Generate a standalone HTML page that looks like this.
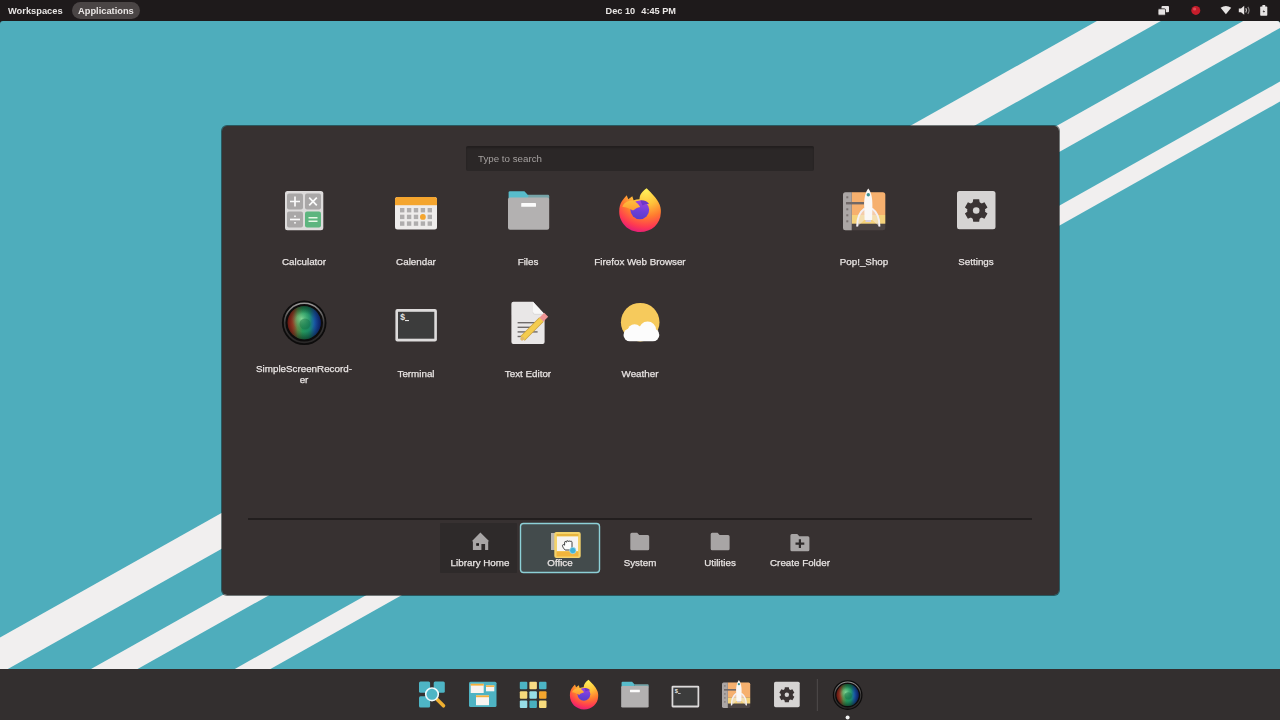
<!DOCTYPE html>
<html><head><meta charset="utf-8">
<style>
*{box-sizing:border-box;margin:0;padding:0}
html,body{width:1280px;height:720px;overflow:hidden;background:#1e1b1b;font-family:"Liberation Sans",sans-serif}
.lbl,.nl,#topbar,#search span{will-change:transform}
.lbl,.nl{-webkit-text-stroke:0.25px #ebe7e6}
#topbar{position:absolute;left:0;top:0;width:1280px;height:21px;background:#1e1a1b;color:#e9e6e5;font-size:9.3px;font-weight:bold;line-height:11px}
#desk{position:absolute;left:0;top:21px;width:1280px;height:648px;background:#4eadbc;overflow:hidden;border-radius:3px 3px 0 0}
#dock{position:absolute;left:0;top:669px;width:1280px;height:51px;background:#332f2f}
#panel{position:absolute;left:220.5px;top:124.5px;width:839px;height:471px;background:#373131;background-clip:padding-box;border:1px solid rgba(10,20,20,.55);border-radius:6px}
#search{position:absolute;left:466px;top:146px;width:348px;height:25px;background:#2b2727;border-radius:2px;box-shadow:inset 0 2px 2px rgba(0,0,0,.22)}
#search span{position:absolute;left:12px;top:7px;font-size:9.75px;line-height:11px;color:#a4a09f}
.lbl{position:absolute;width:112px;color:#e6e2e1;font-size:9.8px;line-height:11px;text-align:center;white-space:nowrap}
.nl{position:absolute;width:80px;color:#e6e2e1;font-size:9.8px;line-height:11px;text-align:center;white-space:nowrap;top:557px}
.abs{position:absolute}
svg.full{position:absolute;left:0;top:0}
</style></head><body>
<div id="topbar">
  <div class="abs" style="left:72px;top:2px;width:68px;height:17px;border-radius:9px;background:#4a4545"></div>
  <div class="abs" style="left:8px;top:6px">Workspaces</div>
  <div class="abs" style="left:78px;top:6px">Applications</div>
  <div class="abs" style="left:605.5px;top:6px;font-size:9.2px">Dec 10</div><div class="abs" style="left:641.3px;top:6px;font-size:9.2px">4:45 PM</div>
</div>
<div id="desk">
  <svg width="1280" height="648" viewBox="0 21 1280 648" style="position:absolute;left:0;top:0">
    <g fill="#f1efef">
      <polygon points="0,637.5 1280,-81.9 1280,-46 0,673.4"/>
      <polygon points="0,720.2 1280,0.3 1280,28 0,746.2"/>
      <polygon points="0,801 1280,81.6 1280,101.6 0,821"/>
    </g>
  </svg>
</div>
<div id="dock"></div>
<div id="panel"></div>
<div id="search"><span>Type to search</span></div>

<svg class="full" width="1280" height="720" viewBox="0 0 1280 720">
<defs>
  <radialGradient id="ffg" cx="0.64" cy="0.04" r="1.05">
    <stop offset="0" stop-color="#fff25a"/>
    <stop offset="0.32" stop-color="#ffc23a"/>
    <stop offset="0.58" stop-color="#ff7c2f"/>
    <stop offset="0.8" stop-color="#ff3b50"/>
    <stop offset="1" stop-color="#d9108a"/>
  </radialGradient>
  <linearGradient id="ffh" x1="0" y1="0" x2="0" y2="1">
    <stop offset="0" stop-color="#ffbe3c"/>
    <stop offset="1" stop-color="#ff9a30"/>
  </linearGradient>
  <linearGradient id="ffp" x1="0.5" y1="0" x2="0.4" y2="1">
    <stop offset="0" stop-color="#a044df"/>
    <stop offset="0.6" stop-color="#6a3fd8"/>
    <stop offset="1" stop-color="#5a3cc8"/>
  </linearGradient>
  <linearGradient id="ssrl" x1="0" y1="0" x2="1" y2="0">
    <stop offset="0" stop-color="#b8281f"/>
    <stop offset="0.16" stop-color="#a8452a"/>
    <stop offset="0.3" stop-color="#5a8a48"/>
    <stop offset="0.45" stop-color="#25955a"/>
    <stop offset="0.65" stop-color="#1a8a66"/>
    <stop offset="0.82" stop-color="#1a5cb0"/>
    <stop offset="1" stop-color="#1838b0"/>
  </linearGradient>
  <radialGradient id="ssrg" cx="0.42" cy="0.38" r="0.32">
    <stop offset="0" stop-color="#9be8a8" stop-opacity=".75"/>
    <stop offset="1" stop-color="#4ac080" stop-opacity="0"/>
  </radialGradient>
  <radialGradient id="ssrv" cx="0.5" cy="0.5" r="0.5">
    <stop offset="0.55" stop-color="#000" stop-opacity="0"/>
    <stop offset="1" stop-color="#000" stop-opacity=".45"/>
  </radialGradient>
  <linearGradient id="ssrr" x1="0" y1="0" x2="0" y2="1">
    <stop offset="0" stop-color="#9a9898"/>
    <stop offset="0.5" stop-color="#3a3838"/>
    <stop offset="1" stop-color="#2a2828"/>
  </linearGradient>

  <!-- Calculator: local box origin (280,186.5) -->
  <g id="i-calc" transform="translate(-280,-186.5)">
    <rect x="285" y="191" width="38.3" height="39.3" rx="2.5" fill="#dddbdb"/>
    <rect x="287" y="193.5" width="16" height="16" rx="2" fill="#a9a7a7"/>
    <rect x="305" y="193.5" width="16" height="16" rx="2" fill="#a9a7a7"/>
    <rect x="287" y="211.5" width="16" height="16" rx="2" fill="#a9a7a7"/>
    <rect x="305" y="211.5" width="16" height="16" rx="2" fill="#5db57f"/>
    <g stroke="#fafafa" stroke-width="1.7" fill="none">
      <path d="M290,201.5H300M295,196.5V206.5"/>
      <path d="M309.2,197.7L316.8,205.3M316.8,197.7L309.2,205.3"/>
      <path d="M290,219.5H300"/>
      <path d="M308.5,217.8H317.5M308.5,221.2H317.5" stroke="#e6f7e6" stroke-width="1.5"/>
    </g>
    <rect x="294.2" y="215.5" width="1.6" height="1.6" fill="#fafafa"/>
    <rect x="294.2" y="222" width="1.6" height="1.6" fill="#fafafa"/>
  </g>

  <!-- Calendar origin (392,186.5) -->
  <g id="i-cal" transform="translate(-392,-186.5)">
    <rect x="395" y="197" width="42" height="32.5" rx="2.5" fill="#eeeceb"/>
    <rect x="395" y="197" width="42" height="8" rx="2.5" fill="#f4a52e"/>
    <rect x="395" y="201" width="42" height="4.2" fill="#f4a52e"/>
    <g fill="#afadad">
      <rect x="400" y="208" width="4.4" height="4.4"/><rect x="406.9" y="208" width="4.4" height="4.4"/><rect x="413.8" y="208" width="4.4" height="4.4"/><rect x="420.7" y="208" width="4.4" height="4.4"/><rect x="427.6" y="208" width="4.4" height="4.4"/>
      <rect x="400" y="214.7" width="4.4" height="4.4"/><rect x="406.9" y="214.7" width="4.4" height="4.4"/><rect x="413.8" y="214.7" width="4.4" height="4.4"/><rect x="427.6" y="214.7" width="4.4" height="4.4"/>
      <rect x="400" y="221.4" width="4.4" height="4.4"/><rect x="406.9" y="221.4" width="4.4" height="4.4"/><rect x="413.8" y="221.4" width="4.4" height="4.4"/><rect x="420.7" y="221.4" width="4.4" height="4.4"/><rect x="427.6" y="221.4" width="4.4" height="4.4"/>
    </g>
    <circle cx="422.9" cy="216.9" r="2.9" fill="#f4a52e"/>
  </g>

  <!-- Files origin (504,186.5) -->
  <g id="i-files" transform="translate(-504,-186.5)">
    <path d="M528,194.8H548Q549.2,194.8 549.2,196.2V199H528Z" fill="#76a4a8"/>
    <path d="M508.6,199V192.6Q508.6,191.2 510,191.2H524.4L528.2,195.2V199Z" fill="#58bccb"/>
    <rect x="508" y="197.4" width="41.2" height="32.3" rx="2" fill="#b3b1b1"/>
    <rect x="521.2" y="203" width="14.8" height="3.8" rx="0.6" fill="#fbfbfb"/>
  </g>

  <!-- Firefox origin (616,186.5) -->
  <g id="i-ff" transform="translate(-616,-186.5)">
    <path d="M646.7,188.3C651,193 657,198 659.7,204.7C661,208 661,211 660.8,213C660.5,224 651.5,232 640,232C628.5,232 619.2,223 619.2,211.5C619.2,207 620.3,203.5 622,201L624.3,198L626.7,195.3L628.3,199.3L632.3,196.3L633.6,200.3C635.5,199.5 637.5,199.2 639.5,199.2C639.6,194.5 642.5,191 646.7,188.3Z" fill="url(#ffg)"/>
    <circle cx="639.8" cy="209.8" r="9.4" fill="url(#ffp)"/>
    <path d="M640.3,200.4C644.5,200.1 647.5,201.6 649.2,204.2C646.5,203.7 644,204.2 642.5,205.6Z" fill="#6e36c8"/>
    <path d="M622.3,206.8C623.8,203 627.5,200.5 632,200.8C635,201 637.8,203.2 640.2,206.9C637.5,207.6 635,208.6 633,210.6C630,208.6 626,207.2 622.3,206.8Z" fill="url(#ffh)"/>
  </g>

  <!-- Pop!_Shop origin (840,186.5) -->
  <g id="i-shop" transform="translate(-840,-186.5)">
    <rect x="843" y="192.3" width="42.3" height="38" rx="2.5" fill="#4b4443"/>
    <path d="M851.7,192.3H882.8Q885.3,192.3 885.3,194.8V215H851.7Z" fill="#f6b06e"/>
    <rect x="851.7" y="215" width="33.6" height="8.7" fill="#f5d27b"/>
    <path d="M845.5,192.3H851.7V230.3H845.5Q843,230.3 843,227.8V194.8Q843,192.3 845.5,192.3Z" fill="#aba6a5"/>
    <rect x="846" y="202" width="18" height="2.4" fill="#706867"/>
    <g fill="#7a7271"><rect x="846.3" y="196.3" width="2" height="2"/><rect x="846.3" y="208.3" width="2" height="2"/><rect x="846.3" y="214.3" width="2" height="2"/><rect x="846.3" y="220.3" width="2" height="2"/></g>
    <path d="M864.6,208C859,211.5 856.5,219 856.8,227L864.8,219.5Z" fill="#f4f0f4" opacity=".45"/>
    <path d="M872,208C877.6,211.5 880.1,219 879.8,227L871.8,219.5Z" fill="#f4f0f4" opacity=".45"/>
    <path d="M864.6,208.5C859.5,212 857,219 857.2,226.5M872,208.5C877.1,212 879.6,219 879.4,226.5" fill="none" stroke="#f3f0f4" stroke-width="2"/>
    <path d="M868.3,188.6C871.4,192.5 872.6,198.5 872.4,206L872.1,220H864.5L864.2,206C864,198.5 865.2,192.5 868.3,188.6Z" fill="#faf8f6"/>
    <circle cx="868.3" cy="194.8" r="1.7" fill="#3b8e93"/>
    <rect x="865.5" y="220" width="5.6" height="2" fill="#d8d0e0"/>
  </g>

  <!-- Settings origin (952,186.5) -->
  <g id="i-set" transform="translate(-952,-186.5)">
    <rect x="957" y="191" width="38.5" height="38.2" rx="2.5" fill="#d6d4d3"/>
    <g fill="#3a3333" transform="translate(976.2,210.5)">
      <circle r="9"/>
      <path d="M-3,-11.3H3L3.6,-7H-3.6ZM-3,11.3H3L3.6,7H-3.6Z"/>
      <path d="M-3,-11.3H3L3.6,-7H-3.6ZM-3,11.3H3L3.6,7H-3.6Z" transform="rotate(60)"/>
      <path d="M-3,-11.3H3L3.6,-7H-3.6ZM-3,11.3H3L3.6,7H-3.6Z" transform="rotate(-60)"/>
      <circle r="3.3" fill="#d6d4d3"/>
    </g>
  </g>

  <!-- SSR origin (280,298.5) -->
  <g id="i-ssr" transform="translate(-280,-298.5)">
    <circle cx="304.2" cy="322.8" r="22.3" fill="#0d0c0c"/>
    <circle cx="304.2" cy="322.8" r="19.6" fill="none" stroke="url(#ssrr)" stroke-width="1.6"/>
    <circle cx="304.2" cy="322.7" r="16.5" fill="url(#ssrl)"/>
    <circle cx="304.2" cy="322.7" r="16.5" fill="url(#ssrg)"/>
    <circle cx="304.2" cy="322.7" r="16.5" fill="url(#ssrv)"/>
    <circle cx="305" cy="324" r="5.5" fill="#176a40" opacity=".4"/>
  </g>

  <!-- Terminal origin (392,298.5) -->
  <g id="i-term" transform="translate(-392,-298.5)">
    <rect x="395.4" y="309.1" width="41.5" height="32.5" rx="2" fill="#dddbdb"/>
    <rect x="398" y="311.8" width="36.3" height="26.9" fill="#3c3c3c"/>
    <text x="400.2" y="320.2" font-family="Liberation Sans" font-weight="bold" font-size="8.6" fill="#e6e6e6">$</text>
    <rect x="405" y="320" width="4" height="1.1" fill="#e6e6e6"/>
  </g>

  <!-- Text editor origin (504,298.5) -->
  <g id="i-ted" transform="translate(-504,-298.5)">
    <path d="M513.4,301.7H533L544.6,314.3V341.9Q544.6,343.9 542.6,343.9H513.4Q511.4,343.9 511.4,341.9V303.7Q511.4,301.7 513.4,301.7Z" fill="#e9e7e7"/>
    <path d="M533,301.7V312.3Q533,314.3 535,314.3H544.6Z" fill="#f8f7f7"/>
    <path d="M533,312.3Q533,314.3 535,314.3H544.6" fill="none" stroke="#cfcccc" stroke-width=".6"/>
    <g fill="#6f6b6b"><rect x="517.6" y="322" width="19" height="1.4"/><rect x="517.6" y="326.6" width="16" height="1.4"/><rect x="517.6" y="331.2" width="20" height="1.4"/><rect x="517.6" y="335.8" width="6" height="1.4"/></g>
    <path d="M522.5,338.5L541.5,319.5" stroke="#c9a040" stroke-width="6.2"/><path d="M522.5,338.5L541.5,319.5" stroke="#f4cc4e" stroke-width="4.8"/>
    <path d="M541.5,319.5L546.2,314.8" stroke="#ee9494" stroke-width="5.6"/>
    <path d="M521,340L523.6,337.4" stroke="#e0b86a" stroke-width="3"/>
  </g>

  <!-- Weather origin (616,298.5) -->
  <g id="i-wea" transform="translate(-616,-298.5)">
    <circle cx="640.2" cy="322.2" r="19.3" fill="#f6ca5c"/>
    <g fill="#fcfcfc">
      <rect x="623.5" y="328.5" width="35.8" height="12.8" rx="6.4"/>
      <circle cx="634.6" cy="331.2" r="7"/>
      <circle cx="647.6" cy="329.9" r="8.5"/>
    </g>
  </g>

  <!-- Dock launcher origin (416,679) size 32 -->
  <g id="d-launch" transform="translate(-415.7,-678.7)">
    <g fill="#4eb5c5">
      <rect x="419" y="681.6" width="11.1" height="11.1" rx="1.5"/>
      <rect x="433.7" y="681.6" width="11.1" height="11.1" rx="1.5"/>
      <rect x="419" y="696.3" width="11.1" height="11.1" rx="1.5"/>
    </g>
    <path d="M437.2,699.5L443.5,705.8" stroke="#f0b030" stroke-width="3.6" stroke-linecap="round"/>
    <circle cx="432" cy="694.3" r="6.3" fill="#4eb5c5" stroke="#effafc" stroke-width="1.6"/>
  </g>
  <g id="d-work" transform="translate(-466.7,-678.5)">
    <rect x="469" y="681.8" width="27.5" height="25.3" rx="1.5" fill="#4eb3c3"/>
    <rect x="470.7" y="683.8" width="13" height="9.2" fill="#f8f4f0"/><rect x="470.7" y="683.8" width="13" height="1.8" fill="#f4b03a"/>
    <rect x="486" y="685.4" width="8.3" height="5.9" fill="#f8f4f0"/><rect x="486" y="685.4" width="8.3" height="1.5" fill="#f4b03a"/>
    <rect x="476" y="695.4" width="13" height="9.8" fill="#f8f4f0"/><rect x="476" y="695.4" width="13" height="1.8" fill="#f4b03a"/>
  </g>
  <g id="d-grid" transform="translate(-517.2,-678.7)">
    <rect x="519.8" y="681.8" width="7.5" height="7.5" rx="1" fill="#4cb4c4"/>
    <rect x="529.4" y="681.8" width="7.5" height="7.5" rx="1" fill="#f7db84"/>
    <rect x="539" y="681.8" width="7.5" height="7.5" rx="1" fill="#4cb4c4"/>
    <rect x="519.8" y="691.2" width="7.5" height="7.5" rx="1" fill="#f8d97b"/>
    <rect x="529.4" y="691.2" width="7.5" height="7.5" rx="1" fill="#97dde6"/>
    <rect x="539" y="691.2" width="7.5" height="7.5" rx="1" fill="#f4a62e"/>
    <rect x="519.8" y="700.4" width="7.5" height="7.5" rx="1" fill="#97dde6"/>
    <rect x="529.4" y="700.4" width="7.5" height="7.5" rx="1" fill="#49b0c0"/>
    <rect x="539" y="700.4" width="7.5" height="7.5" rx="1" fill="#f7db7c"/>
  </g>
</defs>

<!-- panel icons -->
<use href="#i-calc" transform="translate(280,186.5)"/>
<use href="#i-cal" transform="translate(392,186.5)"/>
<use href="#i-files" transform="translate(504,186.5)"/>
<use href="#i-ff" transform="translate(616,186.5)"/>
<use href="#i-shop" transform="translate(840,186.5)"/>
<use href="#i-set" transform="translate(952,186.5)"/>
<use href="#i-ssr" transform="translate(280,298.5)"/>
<use href="#i-term" transform="translate(392,298.5)"/>
<use href="#i-ted" transform="translate(504,298.5)"/>
<use href="#i-wea" transform="translate(616,298.5)"/>

<!-- bottom nav -->
<rect x="248" y="518" width="784" height="2" fill="#221e1e"/>
<rect x="440" y="523" width="77" height="50" rx="1" fill="#2e2a2a"/>
<rect x="520.5" y="523.5" width="79" height="49" rx="3" fill="#434b4c" stroke="#8dd0d7" stroke-width="1.4"/>
<g fill="#a8a5a5">
  <path d="M471.8,541.2L480.4,532.4L489.2,541.2H488.2V550.1H485.1V544.1H481.4V550.1H472.9V541.2Z"/>
  <path d="M630.3,534.2Q630.3,532.7 631.8,532.7H637.2L639.2,535H647.7Q649.2,535 649.2,536.5V548.8Q649.2,550.3 647.7,550.3H631.8Q630.3,550.3 630.3,548.8Z"/>
  <path d="M710.7,534.2Q710.7,532.7 712.2,532.7H717.6L719.6,535H728.1Q729.6,535 729.6,536.5V548.8Q729.6,550.3 728.1,550.3H712.2Q710.7,550.3 710.7,548.8Z"/>
  <path d="M790.4,535.5Q790.4,534 791.9,534H797.3L799.3,536.2H807.9Q809.4,536.2 809.4,537.7V549.8Q809.4,551.3 807.9,551.3H791.9Q790.4,551.3 790.4,549.8Z"/>
</g>
<rect x="476.2" y="543.2" width="2.8" height="2.6" fill="#1e1b1b"/>
<path d="M799.9,539.2V548M795.5,543.6H804.3" stroke="#2e2a2a" stroke-width="2.2"/>
<!-- office dragged icon -->
<rect x="551" y="533" width="4" height="17" fill="#b8b4b0"/>
<rect x="554.3" y="532" width="26.4" height="26" rx="2" fill="#f4d36b"/>
<rect x="556.5" y="534" width="22" height="2.2" fill="#e8b53e"/>
<rect x="557" y="536.5" width="21" height="14.5" fill="#f6f4f2"/>
<rect x="556.5" y="551.5" width="22" height="5" fill="#f0b43c"/>
<path d="M564.5,549.5C563.5,548 562.3,546.5 562.5,545.3C562.8,544.3 564,544.5 564.6,545.2V542.3C564.6,541.2 566.2,541.2 566.3,542.3V541.6C566.4,540.4 568.1,540.4 568.2,541.6C568.3,540.6 570,540.6 570.1,541.7C570.3,540.9 572,541 572,542.2V547C572,548.8 571,550 569.5,550H566C565.3,550 564.9,549.9 564.5,549.5Z" fill="#fdfdfd" stroke="#2b2b2b" stroke-width=".9"/>
<circle cx="572.8" cy="550.5" r="3.2" fill="#3fb2d8" stroke="#bfe6f0" stroke-width=".6"/>

<!-- dock -->
<use href="#d-launch" transform="translate(415.7,678.7)"/>
<use href="#d-work" transform="translate(466.7,678.5)"/>
<use href="#d-grid" transform="translate(517.2,678.7)"/>
<use href="#i-ff" transform="translate(567.7,678.5) scale(0.68)"/>
<use href="#i-files" transform="translate(618.5,678.7) scale(0.667)"/>
<use href="#i-term" transform="translate(669.3,678.7) scale(0.667)"/>
<use href="#i-shop" transform="translate(720,678.7) scale(0.667)"/>
<use href="#i-set" transform="translate(770.7,678.7) scale(0.667)"/>
<rect x="816.8" y="679" width="1.2" height="32" fill="#4a4646"/>
<use href="#i-ssr" transform="translate(831.5,678.8) scale(0.667)"/>
<circle cx="847.6" cy="717.6" r="2" fill="#f4f4f4"/>

<!-- top bar right icons -->
<g fill="#e6e3e3">
  <rect x="1161.5" y="6" width="7.5" height="6.2" rx="1"/>
  <rect x="1158" y="8.8" width="7.5" height="6.4" rx="1" stroke="#1e1a1b" stroke-width=".8"/>
  <path d="M1220.6,7.8Q1225.9,4.2 1231.2,7.8L1225.9,14.3Z"/>
  <path d="M1238.8,8.5H1241L1244.2,5.8V14.8L1241,12.2H1238.8Z"/>
  <path d="M1245.8,8.2Q1247.2,10.3 1245.8,12.5" stroke="#e6e3e3" stroke-width="1.1" fill="none"/>
  <path d="M1247.8,6.8Q1250.4,10.3 1247.8,13.9" stroke="#8a8787" stroke-width="1.1" fill="none"/>
  <rect x="1260.2" y="6.6" width="7.1" height="9.1" rx="0.8"/>
  <rect x="1262.4" y="5" width="2.8" height="2"/>
</g>
<path d="M1264.2,9.5L1262.6,11.8H1264L1263.4,13.6L1265,11H1263.6Z" fill="#1e1a1b"/>
<circle cx="1195.8" cy="10.4" r="4.5" fill="#c51d2b"/>
<circle cx="1194.6" cy="9" r="1.6" fill="#e8606a" opacity=".7"/>
</svg>

<div class="lbl" style="left:248px;top:256px">Calculator</div>
<div class="lbl" style="left:360px;top:256px">Calendar</div>
<div class="lbl" style="left:472px;top:256px">Files</div>
<div class="lbl" style="left:584px;top:256px">Firefox Web Browser</div>
<div class="lbl" style="left:808px;top:256px">Pop!_Shop</div>
<div class="lbl" style="left:920px;top:256px">Settings</div>
<div class="lbl" style="left:248px;top:362.5px">SimpleScreenRecord-<br>er</div>
<div class="lbl" style="left:360px;top:368px">Terminal</div>
<div class="lbl" style="left:472px;top:368px">Text Editor</div>
<div class="lbl" style="left:584px;top:368px">Weather</div>

<div class="nl" style="left:440px">Library Home</div>
<div class="nl" style="left:520px">Office</div>
<div class="nl" style="left:600px">System</div>
<div class="nl" style="left:680px">Utilities</div>
<div class="nl" style="left:760px">Create Folder</div>
</body></html>
